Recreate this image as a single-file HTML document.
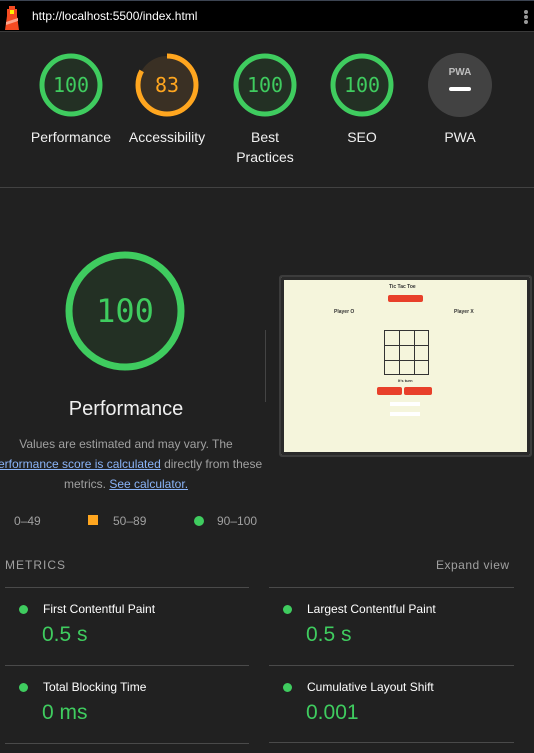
<!DOCTYPE html>
<html><head><meta charset="utf-8"><style>
*{margin:0;padding:0;box-sizing:border-box}
body{width:534px;height:753px;background:#212121;font-family:"Liberation Sans",sans-serif;color:#e0e0e0;position:relative;overflow:hidden}
.abs{position:absolute}
.top{left:0;top:0;width:534px;height:32px;background:#000;border-top:1px solid #3c4452;border-bottom:1px solid #3a3a3a}
.lbl{position:absolute;width:110px;text-align:center;font-size:14px;color:#f0f0f0;line-height:20px}
.desc{position:absolute;left:0;width:252px;text-align:center;font-size:12px;color:#a0a0a0;line-height:20px}
a{color:#8ab4f8;text-decoration:underline}
.line{position:absolute;height:1px;background:#4a4a4a}
.mt{position:absolute;font-size:12px;color:#fff}
.mv{position:absolute;font-size:21px;color:#3fcc5f}
.dot{position:absolute;width:9px;height:9px;border-radius:50%;background:#3fcc5f}
</style></head><body>
<div class="abs top">
<svg class="abs" style="left:4px;top:5px" width="16" height="24" viewBox="0 0 16 24"><rect x="5" y="0" width="6" height="3" fill="#f44b21"/><rect x="3" y="3" width="10" height="7" fill="#f44b21"/><rect x="6" y="4" width="4" height="4" fill="#fff200"/><path d="M3 10h10l2 14H1z" fill="#f44b21"/><path d="M2 16l12-4v3L2 19z" fill="#f9a38a"/></svg>
<div class="abs" style="left:32px;top:8px;font-size:12px;color:#fff">http://localhost:5500/index.html</div>
<div class="abs" style="left:524px;top:9px;width:4px;height:4px;border-radius:50%;background:#999;box-shadow:0 5px 0 #999,0 10px 0 #999"></div>
</div>

<svg class="abs" style="left:0;top:0" width="534" height="190">
<g font-family="DejaVu Sans Mono,Liberation Mono,monospace" font-size="20" text-anchor="middle">
<circle cx="71" cy="85" r="29" fill="#233024" stroke="#3fcc5f" stroke-width="5"/><text x="71" y="92" fill="#3fcc5f">100</text>
<circle cx="167" cy="85" r="29" fill="#3a3024"/><circle cx="167" cy="85" r="29" fill="none" stroke="#ffa61f" stroke-width="5" stroke-dasharray="151.2 200" transform="rotate(-90 167 85)"/><text x="167" y="92" fill="#ffa61f">83</text>
<circle cx="265" cy="85" r="29" fill="#233024" stroke="#3fcc5f" stroke-width="5"/><text x="265" y="92" fill="#3fcc5f">100</text>
<circle cx="362" cy="85" r="29" fill="#233024" stroke="#3fcc5f" stroke-width="5"/><text x="362" y="92" fill="#3fcc5f">100</text>
<circle cx="460" cy="85" r="32" fill="#424242"/>
<text x="460" y="75" fill="#bdbdbd" font-size="10" font-family="Liberation Sans" font-weight="bold">PWA</text>
<rect x="449" y="87" width="22" height="4" rx="2" fill="#fff"/>
</g>
<rect x="0" y="187" width="534" height="1" fill="#424242"/>
</svg>
<div class="lbl" style="left:16px;top:127px">Performance</div>
<div class="lbl" style="left:112px;top:127px">Accessibility</div>
<div class="lbl" style="left:210px;top:127px">Best<br>Practices</div>
<div class="lbl" style="left:307px;top:127px">SEO</div>
<div class="lbl" style="left:405px;top:127px">PWA</div>

<svg class="abs" style="left:0;top:240px" width="260" height="150">
<circle cx="125" cy="71" r="56" fill="#233024" stroke="#3fcc5f" stroke-width="7"/>
<text x="125" y="82" text-anchor="middle" font-family="DejaVu Sans Mono,Liberation Mono,monospace" font-size="32" fill="#3fcc5f">100</text>
</svg>
<div class="abs" style="left:0;width:252px;top:398px;text-align:center;font-size:20px;color:#f0f0f0">Performance</div>
<div class="abs" style="left:265px;top:330px;width:1px;height:72px;background:#444"></div>
<div class="desc" style="top:434px">Values are estimated and may vary. The</div>
<div class="desc" style="top:454px;left:-10px;width:272px;white-space:nowrap"><a>Performance score is calculated</a> directly from these</div>
<div class="desc" style="top:474px">metrics. <a>See calculator.</a></div>
<div class="abs" style="left:14px;top:514px;font-size:12px;color:#a0a0a0">0–49</div>
<div class="abs" style="left:88px;top:515px;width:10px;height:10px;background:#ffa61f"></div>
<div class="abs" style="left:113px;top:514px;font-size:12px;color:#a0a0a0">50–89</div>
<div class="dot" style="left:194px;top:516px;width:10px;height:10px"></div>
<div class="abs" style="left:217px;top:514px;font-size:12px;color:#a0a0a0">90–100</div>

<div class="abs" style="left:279px;top:275px;width:253px;height:182px;border:2px solid #3c3c3c;border-radius:3px;background:#f5f5dc;box-shadow:inset 0 0 0 3px #2a2a2a"></div>
<div class="abs" style="left:284px;top:280px;width:243px;height:171px;background:#f5f5dc"></div>
<div class="abs" style="left:389px;top:284px;font-size:5px;font-weight:bold;color:#333">Tic Tac Toe</div>
<div class="abs" style="left:388px;top:295px;width:35px;height:7px;background:#e8402a;border-radius:2px"></div>
<div class="abs" style="left:334px;top:309px;font-size:5px;font-weight:bold;color:#333">Player O</div>
<div class="abs" style="left:454px;top:309px;font-size:5px;font-weight:bold;color:#333">Player X</div>
<div class="abs" style="left:384px;top:330px;width:45px;height:45px;border:1px solid #333;background:linear-gradient(#333,#333) 14px 0/1px 100% no-repeat,linear-gradient(#333,#333) 29px 0/1px 100% no-repeat,linear-gradient(#333,#333) 0 14px/100% 1px no-repeat,linear-gradient(#333,#333) 0 29px/100% 1px no-repeat"></div>
<div class="abs" style="left:398px;top:378px;font-size:4px;font-weight:bold;color:#333">It's turn</div>
<div class="abs" style="left:377px;top:387px;width:25px;height:8px;background:#e8402a;border-radius:2px"></div>
<div class="abs" style="left:404px;top:387px;width:28px;height:8px;background:#e8402a;border-radius:2px"></div>
<div class="abs" style="left:390px;top:402px;width:30px;height:4px;background:#fff"></div>
<div class="abs" style="left:390px;top:412px;width:30px;height:4px;background:#fff"></div>

<div class="abs" style="left:5px;top:558px;font-size:12px;letter-spacing:1px;color:#a0a0a0">METRICS</div>
<div class="abs" style="left:436px;top:558px;font-size:12px;letter-spacing:.5px;color:#a0a0a0">Expand view</div>
<div class="line" style="left:5px;width:244px;top:587px"></div>
<div class="line" style="left:269px;width:245px;top:587px"></div>
<div class="line" style="left:5px;width:244px;top:665px"></div>
<div class="line" style="left:269px;width:245px;top:665px"></div>
<div class="line" style="left:5px;width:244px;top:743px"></div>
<div class="line" style="left:269px;width:245px;top:742px"></div>
<div class="dot" style="left:19px;top:605px"></div><div class="mt" style="left:43px;top:602px">First Contentful Paint</div><div class="mv" style="left:42px;top:623px">0.5 s</div>
<div class="dot" style="left:283px;top:605px"></div><div class="mt" style="left:307px;top:602px">Largest Contentful Paint</div><div class="mv" style="left:306px;top:623px">0.5 s</div>
<div class="dot" style="left:19px;top:683px"></div><div class="mt" style="left:43px;top:680px">Total Blocking Time</div><div class="mv" style="left:42px;top:701px">0 ms</div>
<div class="dot" style="left:283px;top:683px"></div><div class="mt" style="left:307px;top:680px">Cumulative Layout Shift</div><div class="mv" style="left:306px;top:701px">0.001</div>
</body></html>
